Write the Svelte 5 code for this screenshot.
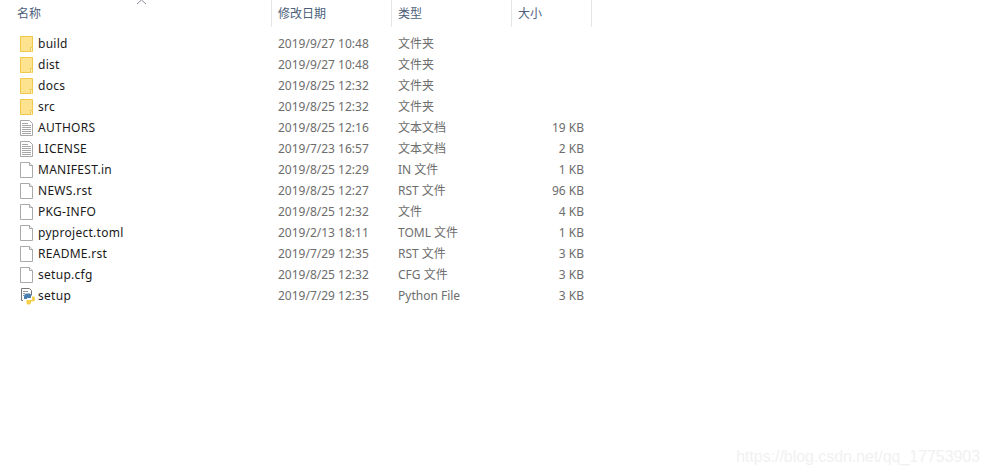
<script>
	const files = [
		{ name: 'build', date: '2019/9/27 10:48', type: '文件夹', size: '', icon: 'folder' },
		{ name: 'dist', date: '2019/9/27 10:48', type: '文件夹', size: '', icon: 'folder' },
		{ name: 'docs', date: '2019/8/25 12:32', type: '文件夹', size: '', icon: 'folder' },
		{ name: 'src', date: '2019/8/25 12:32', type: '文件夹', size: '', icon: 'folder' },
		{ name: 'AUTHORS', date: '2019/8/25 12:16', type: '文本文档', size: '19 KB', icon: 'text' },
		{ name: 'LICENSE', date: '2019/7/23 16:57', type: '文本文档', size: '2 KB', icon: 'text' },
		{ name: 'MANIFEST.in', date: '2019/8/25 12:29', type: 'IN 文件', size: '1 KB', icon: 'file' },
		{ name: 'NEWS.rst', date: '2019/8/25 12:27', type: 'RST 文件', size: '96 KB', icon: 'file' },
		{ name: 'PKG-INFO', date: '2019/8/25 12:32', type: '文件', size: '4 KB', icon: 'file' },
		{ name: 'pyproject.toml', date: '2019/2/13 18:11', type: 'TOML 文件', size: '1 KB', icon: 'file' },
		{ name: 'README.rst', date: '2019/7/29 12:35', type: 'RST 文件', size: '3 KB', icon: 'file' },
		{ name: 'setup.cfg', date: '2019/8/25 12:32', type: 'CFG 文件', size: '3 KB', icon: 'file' },
		{ name: 'setup', date: '2019/7/29 12:35', type: 'Python File', size: '3 KB', icon: 'python' },
	]
</script>

{#snippet fileIcon(icon)}
	<svg class="icon" width="16" height="16" viewBox="0 0 16 16">
		{#if icon === 'folder'}
			<path d="M1.500 .5h12v15h-12z" fill="#fde28f" stroke="#f0c94c" />
			<path d="M11.500 15.500v-4h2v4" fill="#fff3c4" stroke="#f0c94c" />
		{:else if icon === 'text'}
			<path d="M1.500 .5h9l3 3v12h-12z" fill="#fff" stroke="#a6a6a6" />
			<path d="M3 3.500h6M3 5.500h9M3 7.500h9M3 9.500h9M3 11.500h9M3 13.500h9" stroke="#a6a6a6" />
		{:else if icon === 'file'}
			<path d="M1.500 .5h9l3 3v12h-12z" fill="#fff" stroke="#a9a9a9" />
			<path d="M10.500 .5v3h3" fill="#f4f4f4" stroke="#a9a9a9" />
		{:else}
			<path d="M2.500 .5h8l2 2v5M4 12.500H2.500V.5" fill="#fff" stroke="#777" />
			<path d="M4 3.500h5M4 5.500h2M4 7.500h1" stroke="#999" />
			<path d="M5 9C5 6.500 6 5.500 8 5.500h2.500c1 0 1.500.7 1.500 1.500v3H8v1H5z" fill="#4a80ae" />
			<path d="M15.500 8.500c.4 1 .5 1.500.5 2.500 0 1.500-.7 2.500-2 2.500h-2V15c0 .9-1 1.500-2.500 1.500S7.500 15.900 7.500 15v-3H12c.5 0 1-.4 1-1V8.500z" fill="#f6d04d" />
		{/if}
	</svg>
{/snippet}

<div class="page">
	<div class="head">
		<div class="col name">
			名称
			<svg class="sort" width="11" height="6" viewBox="0 0 11 6"><path d="M1 5l4.500-4 4.500 4" fill="none" stroke="#8a8f98" /></svg>
		</div>
		<div class="col">修改日期</div>
		<div class="col">类型</div>
		<div class="col">大小</div>
	</div>
	<div class="list">
		{#each files as f}
			<div class="row">
				<div class="cell filename">{@render fileIcon(f.icon)}<span>{f.name}</span></div>
				<div class="cell">{f.date}</div>
				<div class="cell">{f.type}</div>
				<div class="cell size">{f.size}</div>
			</div>
		{/each}
	</div>
	<div class="mark">https://blog.csdn.net/qq_17753903</div>
</div>

<style>
	:global(body) {
		background: #fff;
	}
	.page {
		position: relative;
		width: 989px;
		height: 474px;
		overflow: hidden;
		background: #fff;
		font-family: "Noto Sans", "Noto Sans CJK SC", sans-serif;
		font-size: 12px;
		color: #6d6d6d;
	}
	.head,
	.row {
		display: grid;
		grid-template-columns: 272px 120px 120px 80px;
		width: 592px;
	}
	.head {
		height: 27px;
		color: #4c607a;
	}
	.col {
		position: relative;
		box-sizing: border-box;
		padding: 6px 0 0 6px;
		border-right: 1px solid #e5e5e5;
		line-height: 16px;
	}
	.col.name {
		padding-left: 17px;
	}
	.sort {
		position: absolute;
		left: 136px;
		top: -1px;
	}
	.list {
		padding-top: 6px;
	}
	.row {
		height: 21px;
		line-height: 21px;
	}
	.cell {
		padding-left: 6px;
		white-space: nowrap;
	}
	.filename {
		display: flex;
		align-items: center;
		gap: 3px;
		padding-left: 19px;
		color: #1a1a1a;
		letter-spacing: 0.28px;
	}
	.icon {
		flex: none;
		overflow: visible;
	}
	.size {
		padding: 0 8px 0 0;
		text-align: right;
	}
	.mark {
		position: absolute;
		right: 9px;
		top: 448px;
		font-family: "Liberation Sans", sans-serif;
		font-size: 15.9px;
		line-height: 18px;
		color: #f1f1f1;
	}
</style>
